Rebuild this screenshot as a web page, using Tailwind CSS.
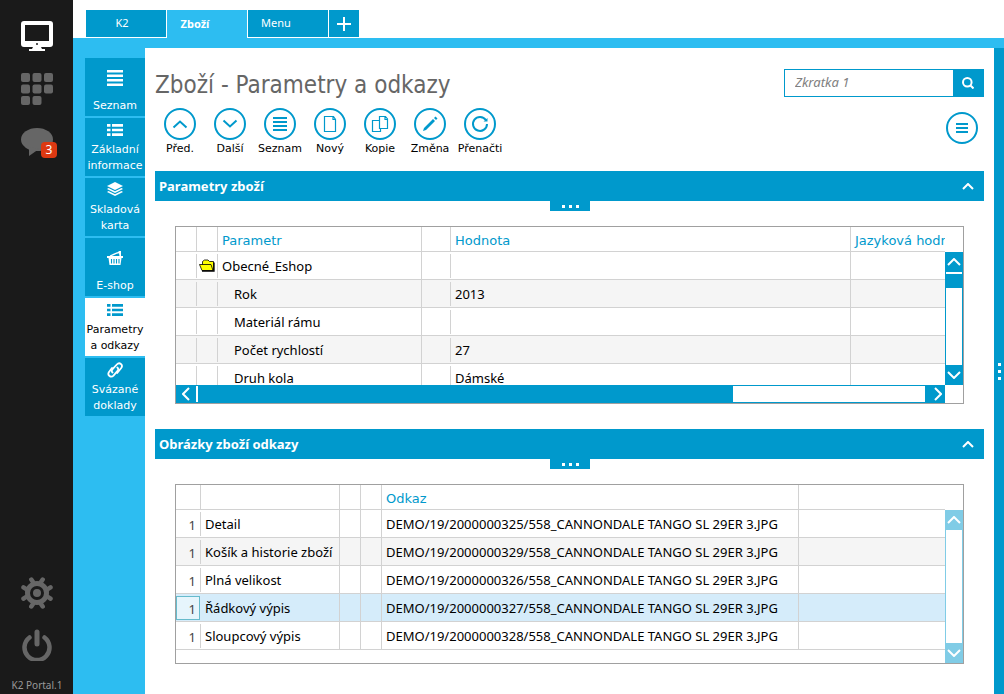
<!DOCTYPE html>
<html lang="cs">
<head>
<meta charset="utf-8">
<meta name="viewport" content="width=device-width, initial-scale=1">
<title>K2 – Zboží</title>
<script src="https://cdn.jsdelivr.net/npm/@tailwindcss/browser@4"></script>
</head>
<body class="bg-white font-['Noto_Sans','Open_Sans',sans-serif] text-black">
<div class="flex h-screen overflow-hidden">

  <!-- Application rail -->
  <nav class="flex w-[73px] shrink-0 flex-col items-center bg-[#1a1a1a] pt-5 pl-px text-[#666]" aria-label="Aplikace">
    <button type="button" aria-label="Plocha" class="h-8 w-8 text-white">
      <svg viewBox="0 0 32 32" class="h-8 w-8"><path fill-rule="evenodd" d="M3 1h26a3 3 0 0 1 3 3v20a3 3 0 0 1-3 3H3a3 3 0 0 1-3-3V4a3 3 0 0 1 3-3zM4 5v16h24V5z" fill="currentColor"/><path d="M12 27h8l1 2h3v2H8v-2h3z" fill="currentColor"/><circle cx="16" cy="24" r="1" fill="#1a1a1a"/></svg>
    </button>
    <button type="button" aria-label="Dlaždice" class="mt-5 h-8 w-8">
      <svg viewBox="0 0 32 32" class="h-8 w-8 overflow-visible" fill="currentColor"><rect x="0" y="1" width="9" height="9" rx="2"/><rect x="11.500" y="1" width="9" height="9" rx="2"/><rect x="23" y="1" width="9" height="9" rx="2"/><rect x="0" y="12.500" width="9" height="9" rx="2"/><rect x="11.500" y="12.500" width="9" height="9" rx="2"/><rect x="23" y="12.500" width="9" height="9" rx="2"/><rect x="0" y="24" width="9" height="9" rx="2"/><rect x="11.500" y="24" width="9" height="9" rx="2"/></svg>
    </button>
    <button type="button" aria-label="Zprávy" class="relative mt-6 h-8 w-8">
      <svg viewBox="0 0 32 32" class="h-8 w-8" fill="currentColor"><ellipse cx="16" cy="11.500" rx="16" ry="11.500"/><path d="M8 19v9l10-7z"/></svg>
      <span class="absolute top-[14px] left-5 flex h-4 w-4 items-center justify-center rounded-sm bg-[#dc3912] text-xs text-white">3</span>
    </button>
    <div class="mt-auto flex flex-col items-center">
      <button type="button" aria-label="Nastavení" class="h-8 w-8">
        <svg viewBox="0 0 32 32" class="h-8 w-8" fill="none" stroke="currentColor"><g stroke-width="4.500" stroke-linecap="round"><path d="M13 6.500 10.300 2.500M19 6.500l2.700-4M25.500 13l4-2.700M25.500 19l4 2.700M19 25.500l2.700 4M13 25.500l-2.700 4M6.500 19l-4 2.700M6.500 13l-4-2.700"/></g><circle cx="16" cy="16" r="9.500" stroke-width="5"/><circle cx="16" cy="16" r="4" fill="currentColor" stroke="none"/></svg>
      </button>
      <button type="button" aria-label="Odhlásit" class="mt-5 h-8 w-8">
        <svg viewBox="0 0 32 32" class="h-8 w-8" fill="none" stroke="currentColor" stroke-width="4.500" stroke-linecap="round"><path d="M8.500 8.500a12.500 12.500 0 1 0 15 0"/><path d="M16 3v12" stroke-width="5"/></svg>
      </button>
      <span class="mt-4 pb-px text-[10px] leading-4 text-[#999]">K2 Portal.1</span>
    </div>
  </nav>

  <div class="flex min-w-0 flex-1 flex-col">
    <!-- Tabs -->
    <header class="flex h-[38px] shrink-0 gap-px pt-[10px] pl-[13px] text-[11px] text-white">
      <button type="button" class="mb-px w-20 bg-[#0099cc] pr-2">K2</button>
      <button type="button" class="w-20 bg-[#2dbdf1] pt-px pr-6 font-bold">Zboží</button>
      <button type="button" class="mb-px w-20 bg-[#0099cc] pr-6">Menu</button>
      <button type="button" aria-label="Nová záložka" class="mb-px flex w-[30px] items-center justify-center bg-[#0099cc]">
        <svg viewBox="0 0 14 14" class="h-[14px] w-[14px]" stroke="currentColor" stroke-width="2"><path d="M7 0v14M0 7h14"/></svg>
      </button>
    </header>

    <div class="flex min-h-0 flex-1 bg-[#2dbdf1] pt-[10px]">
      <!-- Page sections -->
      <nav class="flex w-[72px] shrink-0 flex-col gap-[2px] pt-[10px] pl-3 text-center font-['DejaVu_Sans',sans-serif] text-[11px] leading-4 text-white" aria-label="Sekce">
        <a href="#" class="flex h-[58px] flex-col items-center justify-between bg-[#0099cc] pt-3 pb-[2px]">
          <svg viewBox="0 0 16 16" class="h-4 w-4" fill="currentColor"><path d="M0 0h16v2.500H0zM0 4.500h16V7H0zM0 9h16v2.500H0zM0 13.500h16V16H0z"/></svg>
          <span>Seznam</span>
        </a>
        <a href="#" class="flex h-[58px] flex-col items-center justify-between bg-[#0099cc] pt-[6px] pb-[2px]">
          <svg viewBox="0 0 16 12" class="h-3 w-4" fill="currentColor"><path d="M0 0h3.500v2.700H0zM5 0h11v2.700H5zM0 4.700h3.500v2.600H0zM5 4.700h11v2.600H5zM0 9.300h3.500V12H0zM5 9.300h11V12H5z"/></svg>
          <span>Základní<br>informace</span>
        </a>
        <a href="#" class="flex h-[58px] flex-col items-center justify-between bg-[#0099cc] pt-1 pb-[2px]">
          <svg viewBox="0 0 16 14" class="h-[14px] w-4" fill="currentColor"><path d="M8 0l8 4-8 4-8-4z"/><path d="M1.500 6 8 9.200 14.500 6 16 7l-8 4-8-4zM1.500 9 8 12.200 14.500 9l1.500 1-8 4-8-4z"/></svg>
          <span>Skladová<br>karta</span>
        </a>
        <a href="#" class="flex h-[58px] flex-col items-center justify-between bg-[#0099cc] pt-3 pb-[2px]">
          <svg viewBox="0 0 16 16" class="h-4 w-4" fill="currentColor"><path d="M0 6h16v2H0zM1.500 8h13l-1 7h-11z"/><path d="M3 6c3-.5 5-3 9-3.500" fill="none" stroke="currentColor" stroke-width="1.400"/><path d="M11.500 1H14v5h-1.500z"/><path d="M4.500 9v4.500M7 9v4.500M9.500 9v4.500M12 9v4.500" stroke="#0099cc" stroke-width="1.100"/></svg>
          <span>E-shop</span>
        </a>
        <a href="#" aria-current="page" class="flex h-[58px] flex-col items-center justify-between bg-white pt-[6px] pb-[2px] text-black">
          <svg viewBox="0 0 16 12" class="h-3 w-4" fill="#0099cc"><path d="M0 0h3.500v2.700H0zM5 0h11v2.700H5zM0 4.700h3.500v2.600H0zM5 4.700h11v2.600H5zM0 9.300h3.500V12H0zM5 9.300h11V12H5z"/></svg>
          <span>Parametry<br>a odkazy</span>
        </a>
        <a href="#" class="flex h-[58px] flex-col items-center justify-between bg-[#0099cc] pt-1 pb-[2px]">
          <svg viewBox="0 0 16 16" class="h-4 w-4" fill="none" stroke="currentColor" stroke-width="1.800" stroke-linecap="round"><path d="M5.500 10.500c-1.200-1-.8-2.500.3-3.700l4-4.300c2.700-2.800 6.700.3 4.400 3.500l-4 5"/><path d="M10.300 5.500c1.400 1 1 2.500 0 3.700l-3.800 4.400c-2.600 2.600-6.600-.4-4.500-3.600l3-4"/></svg>
          <span>Svázané<br>doklady</span>
        </a>
      </nav>

      <main class="min-w-0 flex-1 bg-white px-[10px] pt-[21px]">
        <div class="flex items-start justify-between">
          <h1 class="font-['DejaVu_Sans_Condensed','DejaVu_Sans',sans-serif] text-2xl leading-8 text-[#666]">Zboží - Parametry a odkazy</h1>
          <form class="flex h-7 w-[200px] border border-[#0099cc]" onsubmit="return false">
            <input type="text" aria-label="Hledat" placeholder="Zkratka 1" class="min-w-0 flex-1 px-[10px] text-[13px] italic outline-none placeholder:text-[#808080]">
            <button type="submit" aria-label="Hledat" class="flex w-[30px] items-center justify-center bg-[#0099cc] text-white">
              <svg viewBox="0 0 12 12" class="h-3 w-3" fill="none" stroke="currentColor" stroke-width="2"><circle cx="5.300" cy="5.300" r="4.300"/><path d="M8.500 8.500l3 3"/></svg>
            </button>
          </form>
        </div>

        <!-- Toolbar -->
        <div class="mt-[7px] flex items-start justify-between">
          <div class="flex font-['DejaVu_Sans',sans-serif] text-[11px] leading-[18px]">
            <button type="button" class="flex w-[50px] flex-col items-center">
              <svg viewBox="0 0 32 32" class="h-8 w-8" fill="none" stroke="#0099cc" stroke-width="2"><circle cx="16" cy="16" r="15"/><path d="M9.500 19.500l6.500-6 6.500 6"/></svg>
              <span>Před.</span>
            </button>
            <button type="button" class="flex w-[50px] flex-col items-center">
              <svg viewBox="0 0 32 32" class="h-8 w-8" fill="none" stroke="#0099cc" stroke-width="2"><circle cx="16" cy="16" r="15"/><path d="M9.500 12.500l6.500 6 6.500-6"/></svg>
              <span>Další</span>
            </button>
            <button type="button" class="flex w-[50px] flex-col items-center">
              <svg viewBox="0 0 32 32" class="h-8 w-8" fill="none" stroke="#0099cc" stroke-width="2"><circle cx="16" cy="16" r="15"/><path d="M9 10h14M9 14h14M9 18h14M9 22h14"/></svg>
              <span>Seznam</span>
            </button>
            <button type="button" class="flex w-[50px] flex-col items-center">
              <svg viewBox="0 0 32 32" class="h-8 w-8" fill="none" stroke="#0099cc" stroke-width="2"><circle cx="16" cy="16" r="15"/><path d="M10.500 8.500h9l2 3v12h-11zM19 8.500v3h2.500" stroke-width="1.200"/></svg>
              <span>Nový</span>
            </button>
            <button type="button" class="flex w-[50px] flex-col items-center">
              <svg viewBox="0 0 32 32" class="h-8 w-8" fill="none" stroke="#0099cc" stroke-width="2"><circle cx="16" cy="16" r="15"/><g stroke-width="1.200"><path d="M15.500 8.500h6l2 2.500v9.500h-8zM21 8.500v3h2.500"/><path d="M15.500 12.500h-7v11h8v-3"/></g></svg>
              <span>Kopie</span>
            </button>
            <button type="button" class="flex w-[50px] flex-col items-center">
              <svg viewBox="0 0 32 32" class="h-8 w-8" fill="none" stroke="#0099cc" stroke-width="2"><circle cx="16" cy="16" r="15"/><path d="M9 23l1-3L19 11l2 2-9 9zM20 10l1.500-1.500 2 2L22 12z" fill="#0099cc" stroke="none"/></svg>
              <span>Změna</span>
            </button>
            <button type="button" class="flex w-[50px] flex-col items-center">
              <svg viewBox="0 0 32 32" class="h-8 w-8" fill="none" stroke="#0099cc" stroke-width="2"><circle cx="16" cy="16" r="15"/><path d="M21.800 12a7 7 0 1 0 1.200 4"/><path d="M23.500 10v3.500h-4z" fill="#0099cc" stroke="none"/></svg>
              <span>Přenačti</span>
            </button>
          </div>
          <button type="button" aria-label="Nabídka" class="mt-1 mr-[6px]">
            <svg viewBox="0 0 32 32" class="h-8 w-8" fill="none" stroke="#0099cc" stroke-width="2"><circle cx="16" cy="16" r="15"/><path d="M10 12h12M10 16h12M10 20h12"/></svg>
          </button>
        </div>

        <!-- Parameters -->
        <section class="mt-[13px]">
          <h2 class="flex h-[30px] items-center justify-between bg-[#0099cc] pt-[2px] pr-[10px] pl-1 text-[13px] font-bold text-white">
            Parametry zboží
            <button type="button" aria-label="Sbalit"><svg viewBox="0 0 12 8" class="h-2 w-3" fill="none" stroke="currentColor" stroke-width="2"><path d="M1 6l5-5 5 5"/></svg></button>
          </h2>
          <button type="button" aria-label="Další volby" class="mx-auto flex h-[10px] w-10 justify-center gap-1 bg-[#0099cc] pt-1 pl-[2px]">
            <span class="h-[3px] w-[3px] bg-white"></span><span class="h-[3px] w-[3px] bg-white"></span><span class="h-[3px] w-[3px] bg-white"></span>
          </button>
          <div class="mx-5 mt-[15px] grid grid-cols-[minmax(0,1fr)_18px] border border-[#a0a0a0]">
            <div class="h-[158px] overflow-hidden">
              <table class="w-full table-fixed border-separate border-spacing-0 text-[13px] leading-[26px] whitespace-nowrap">
                <colgroup><col class="w-[21px]"><col class="w-[21px]"><col class="w-[204px]"><col class="w-[29px]"><col class="w-[399px]"><col></colgroup>
                <thead class="font-['DejaVu_Sans',sans-serif] text-[#0099cc]">
                  <tr class="h-[25px] text-left leading-5 *:border-b *:border-[#d2d2d2] *:p-0 *:font-normal">
                    <th class="border-r"></th><th class="border-r"></th><th class="border-r"><div class="pt-1 pl-1">Parametr</div></th><th class="border-r"></th><th><div class="pt-1 pl-1">Hodnota</div></th><th class="overflow-hidden border-l"><div class="pt-1 pl-1">Jazyková hodnota</div></th>
                  </tr>
                </thead>
                <tbody>
                  <tr class="h-7 *:border-b *:border-[#d2d2d2] *:p-0">
                    <td><div class="h-6 border-r border-[#d2d2d2]"></div></td>
                    <td><div class="flex h-6 items-center justify-center border-r border-[#d2d2d2]">
                      <svg viewBox="0 0 16 13" class="h-[13px] w-4"><path d="M3.500 10V2.500l2-1.500h3.500l1.500 1.500h4V11z" fill="#ff0" stroke="#000" stroke-width=".8"/><path d="M.5 5.500h11.500l2 6H3z" fill="#ff0" stroke="#000" stroke-width=".8"/><path d="M3 12h12V3.500" fill="none" stroke="#000" stroke-width="1.300"/></svg>
                    </div></td>
                    <td class="border-r"><div class="pl-1">Obecné_Eshop</div></td>
                    <td><div class="h-6 border-r border-[#d2d2d2]"></div></td><td></td><td class="border-l"></td>
                  </tr>
                  <tr class="h-7 bg-[#f5f5f5] *:border-b *:border-[#d2d2d2] *:p-0">
                    <td><div class="h-6 border-r border-[#d2d2d2]"></div></td><td><div class="h-6 border-r border-[#d2d2d2]"></div></td>
                    <td class="border-r"><div class="pl-4">Rok</div></td>
                    <td><div class="h-6 border-r border-[#d2d2d2]"></div></td><td><div class="pl-1">2013</div></td><td class="border-l"></td>
                  </tr>
                  <tr class="h-7 *:border-b *:border-[#d2d2d2] *:p-0">
                    <td><div class="h-6 border-r border-[#d2d2d2]"></div></td><td><div class="h-6 border-r border-[#d2d2d2]"></div></td>
                    <td class="border-r"><div class="pl-4">Materiál rámu</div></td>
                    <td><div class="h-6 border-r border-[#d2d2d2]"></div></td><td></td><td class="border-l"></td>
                  </tr>
                  <tr class="h-7 bg-[#f5f5f5] *:border-b *:border-[#d2d2d2] *:p-0">
                    <td><div class="h-6 border-r border-[#d2d2d2]"></div></td><td><div class="h-6 border-r border-[#d2d2d2]"></div></td>
                    <td class="border-r"><div class="pl-4">Počet rychlostí</div></td>
                    <td><div class="h-6 border-r border-[#d2d2d2]"></div></td><td><div class="pl-1">27</div></td><td class="border-l"></td>
                  </tr>
                  <tr class="h-7 *:border-b *:border-[#d2d2d2] *:p-0">
                    <td><div class="h-6 border-r border-[#d2d2d2]"></div></td><td><div class="h-6 border-r border-[#d2d2d2]"></div></td>
                    <td class="border-r"><div class="pl-4">Druh kola</div></td>
                    <td><div class="h-6 border-r border-[#d2d2d2]"></div></td><td><div class="pl-1">Dámské</div></td><td class="border-l"></td>
                  </tr>
                </tbody>
              </table>
            </div>
            <div class="mt-[25px] flex flex-col bg-[#0099cc] text-white">
              <button type="button" aria-label="Nahoru" class="flex h-5 items-center justify-center"><svg viewBox="0 0 14 8" class="h-2 w-[14px]" fill="none" stroke="currentColor" stroke-width="2"><path d="M1 7l6-6 6 6"/></svg></button>
              <div class="mx-px h-[2px] bg-white"></div>
              <div class="mx-px mt-[14px] flex-1 bg-white"></div>
              <button type="button" aria-label="Dolů" class="flex h-5 items-center justify-center"><svg viewBox="0 0 14 8" class="h-2 w-[14px]" fill="none" stroke="currentColor" stroke-width="2"><path d="M1 1l6 6 6-6"/></svg></button>
            </div>
            <div class="flex h-[18px] bg-[#0099cc] py-px text-white">
              <button type="button" aria-label="Doleva" class="flex w-5 items-center justify-center"><svg viewBox="0 0 8 14" class="h-[14px] w-2" fill="none" stroke="currentColor" stroke-width="2"><path d="M7 1L1 7l6 6"/></svg></button>
              <div class="w-[2px] bg-white"></div>
              <div class="w-[535px]"></div>
              <div class="flex-1 bg-white"></div>
              <button type="button" aria-label="Doprava" class="flex w-5 items-center justify-end pr-[3px]"><svg viewBox="0 0 8 14" class="h-[14px] w-2" fill="none" stroke="currentColor" stroke-width="2"><path d="M1 1l6 6-6 6"/></svg></button>
            </div>
          </div>
        </section>

        <!-- Image links -->
        <section class="mt-[25px]">
          <h2 class="flex h-[30px] items-center justify-between bg-[#0099cc] pt-[2px] pr-[10px] pl-1 text-[13px] font-bold text-white">
            Obrázky zboží odkazy
            <button type="button" aria-label="Sbalit"><svg viewBox="0 0 12 8" class="h-2 w-3" fill="none" stroke="currentColor" stroke-width="2"><path d="M1 6l5-5 5 5"/></svg></button>
          </h2>
          <button type="button" aria-label="Další volby" class="mx-auto flex h-[10px] w-10 justify-center gap-1 bg-[#0099cc] pt-1 pl-[2px]">
            <span class="h-[3px] w-[3px] bg-white"></span><span class="h-[3px] w-[3px] bg-white"></span><span class="h-[3px] w-[3px] bg-white"></span>
          </button>
          <div class="mx-5 mt-[15px] grid grid-cols-[minmax(0,1fr)_18px] border border-[#a0a0a0]">
            <div class="overflow-hidden pb-[13px]">
              <table class="w-full table-fixed border-separate border-spacing-0 text-[13px] leading-[26px] whitespace-nowrap">
                <colgroup><col class="w-[25px]"><col class="w-[139px]"><col class="w-[21px]"><col class="w-[21px]"><col class="w-[417px]"><col></colgroup>
                <thead class="font-['DejaVu_Sans',sans-serif] text-[#0099cc]">
                  <tr class="h-[25px] text-left leading-5 *:border-b *:border-[#d2d2d2] *:p-0 *:font-normal">
                    <th class="border-r"></th><th class="border-r"></th><th class="border-r"></th><th class="border-r"></th><th class="border-r"><div class="pt-1 pl-1">Odkaz</div></th><th></th>
                  </tr>
                </thead>
                <tbody>
                  <tr class="h-7 *:border-b *:border-[#d2d2d2] *:p-0">
                    <td><div class="h-6 border-r border-[#d2d2d2] pr-1 text-right text-[#444]">1</div></td>
                    <td class="border-r"><div class="pl-1">Detail</div></td><td class="border-r"></td><td class="border-r"></td>
                    <td class="border-r"><div class="pl-1">DEMO/19/2000000325/558_CANNONDALE TANGO SL 29ER 3.JPG</div></td><td></td>
                  </tr>
                  <tr class="h-7 bg-[#f5f5f5] *:border-b *:border-[#d2d2d2] *:p-0">
                    <td><div class="h-6 border-r border-[#d2d2d2] pr-1 text-right text-[#444]">1</div></td>
                    <td class="border-r"><div class="pl-1">Košík a historie zboží</div></td><td class="border-r"></td><td class="border-r"></td>
                    <td class="border-r"><div class="pl-1">DEMO/19/2000000329/558_CANNONDALE TANGO SL 29ER 3.JPG</div></td><td></td>
                  </tr>
                  <tr class="h-7 *:border-b *:border-[#d2d2d2] *:p-0">
                    <td><div class="h-6 border-r border-[#d2d2d2] pr-1 text-right text-[#444]">1</div></td>
                    <td class="border-r"><div class="pl-1">Plná velikost</div></td><td class="border-r"></td><td class="border-r"></td>
                    <td class="border-r"><div class="pl-1">DEMO/19/2000000326/558_CANNONDALE TANGO SL 29ER 3.JPG</div></td><td></td>
                  </tr>
                  <tr class="h-7 bg-[#d5ecfa] *:border-b *:border-[#d2d2d2] *:p-0" aria-selected="true">
                    <td><div class="mr-px h-6 border border-[#66bbcc] bg-[#e6f5fc] pr-[3px] text-right leading-6 text-[#444]">1</div></td>
                    <td class="border-r"><div class="pl-1">Řádkový výpis</div></td><td class="border-r"></td><td class="border-r"></td>
                    <td class="border-r"><div class="pl-1">DEMO/19/2000000327/558_CANNONDALE TANGO SL 29ER 3.JPG</div></td><td></td>
                  </tr>
                  <tr class="h-7 *:border-b *:border-[#d2d2d2] *:p-0">
                    <td><div class="h-6 border-r border-[#d2d2d2] pr-1 text-right text-[#444]">1</div></td>
                    <td class="border-r"><div class="pl-1">Sloupcový výpis</div></td><td class="border-r"></td><td class="border-r"></td>
                    <td class="border-r"><div class="pl-1">DEMO/19/2000000328/558_CANNONDALE TANGO SL 29ER 3.JPG</div></td><td></td>
                  </tr>
                </tbody>
              </table>
            </div>
            <div class="mt-[25px] flex flex-col bg-[#80cce6] text-white">
              <button type="button" aria-label="Nahoru" class="flex h-5 items-center justify-center"><svg viewBox="0 0 14 8" class="h-2 w-[14px]" fill="none" stroke="currentColor" stroke-width="2"><path d="M1 7l6-6 6 6"/></svg></button>
              <div class="mx-px flex-1 bg-white"></div>
              <button type="button" aria-label="Dolů" class="flex h-5 items-center justify-center"><svg viewBox="0 0 14 8" class="h-2 w-[14px]" fill="none" stroke="currentColor" stroke-width="2"><path d="M1 1l6 6 6-6"/></svg></button>
            </div>
          </div>
        </section>
      </main>

      <!-- Side panel handle -->
      <button type="button" aria-label="Otevřít panel" class="flex w-[10px] shrink-0 flex-col items-center justify-center gap-1 bg-[#0099cc]">
        <span class="h-[3px] w-[3px] bg-white"></span><span class="h-[3px] w-[3px] bg-white"></span><span class="h-[3px] w-[3px] bg-white"></span>
      </button>
    </div>
  </div>
</div>
</body>
</html>
